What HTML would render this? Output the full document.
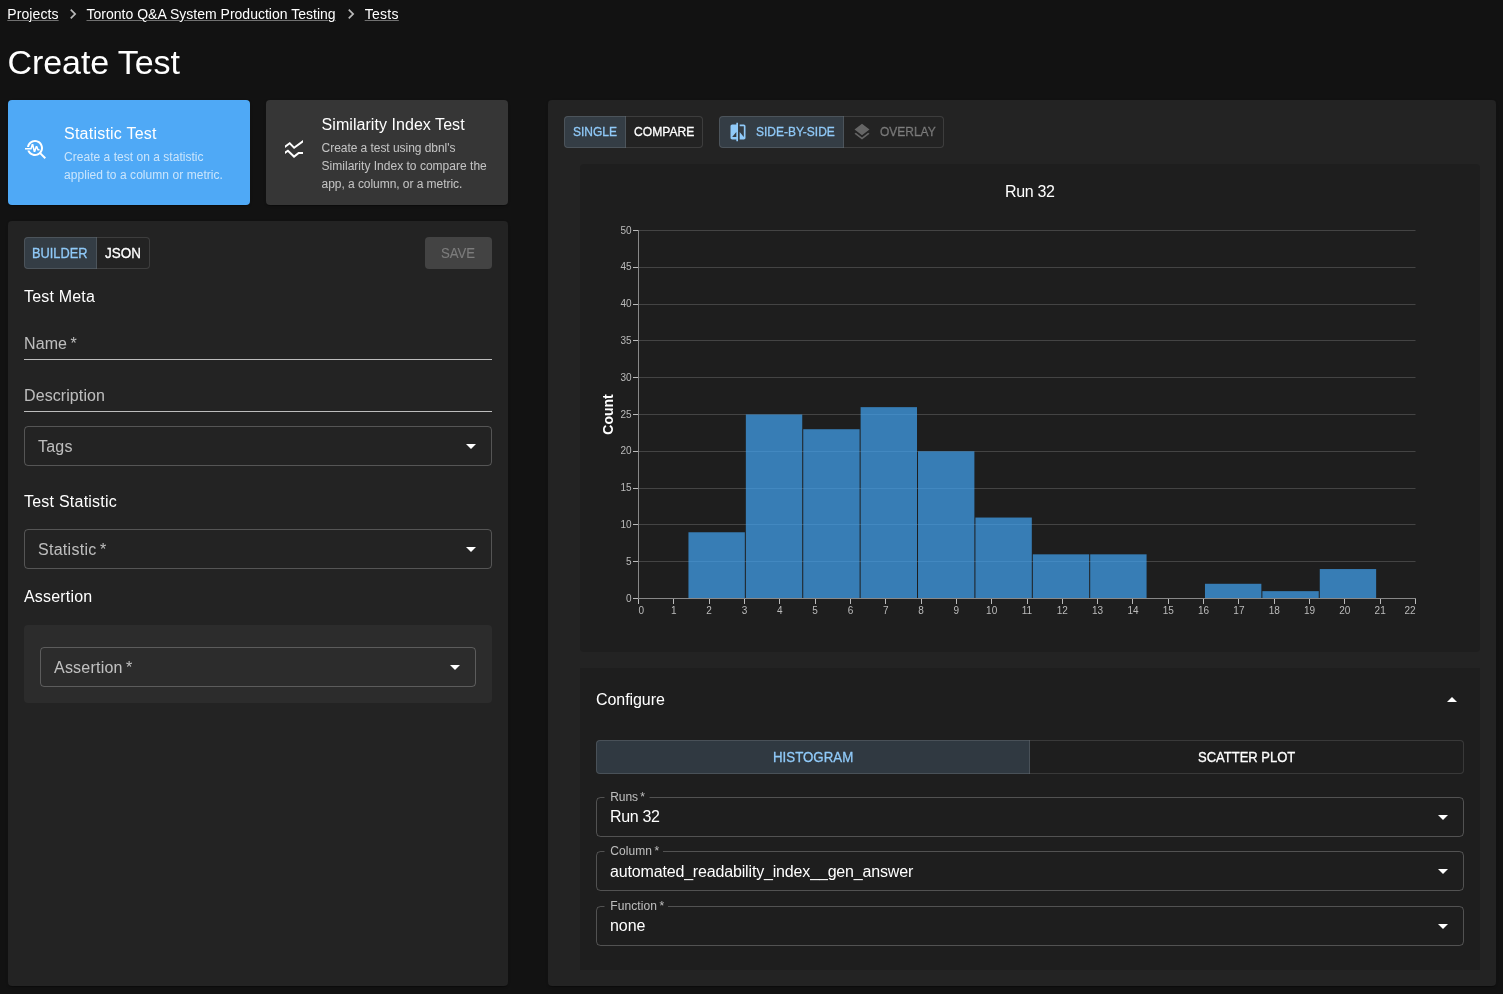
<!DOCTYPE html><html lang="en"><head><meta charset="utf-8"><title>Create Test</title><style>

html,body{margin:0;padding:0}
body{width:1503px;height:994px;overflow:hidden;background:#121212;position:relative;font-family:"Liberation Sans", Arial, sans-serif;color:#fff;-webkit-font-smoothing:antialiased}
#root{position:absolute;left:0;top:0;width:1503px;height:994px;will-change:transform}
.b,.ic,.t{position:absolute;box-sizing:border-box}
.t{white-space:pre;margin:0;font-weight:400;line-height:1}
.m{-webkit-text-stroke:0.3px currentColor;transform-origin:0 0}
.ns{-webkit-text-stroke:0.12px currentColor}
.ul{text-decoration:underline;text-decoration-color:rgba(255,255,255,0.4);text-decoration-thickness:1px;text-underline-offset:0.5px}
svg text{font-family:"Liberation Sans", Arial, sans-serif}

</style></head><body><div id="root">
<div class="b" style="left:8px;top:100px;width:242px;height:105px;background:#4fa9f6;border-radius:4px;box-shadow:0 2px 1px -1px rgba(0,0,0,.2),0 1px 1px 0 rgba(0,0,0,.14),0 1px 3px 0 rgba(0,0,0,.12);"></div>
<div class="b" style="left:266px;top:100px;width:242px;height:105px;background:#363636;border-radius:4px;box-shadow:0 2px 1px -1px rgba(0,0,0,.2),0 1px 1px 0 rgba(0,0,0,.14),0 1px 3px 0 rgba(0,0,0,.12);"></div>
<div class="b" style="left:8px;top:221px;width:500px;height:765px;background:#232323;border-radius:4px;box-shadow:0 2px 1px -1px rgba(0,0,0,.2),0 1px 1px 0 rgba(0,0,0,.14),0 1px 3px 0 rgba(0,0,0,.12);"></div>
<div class="b" style="left:548px;top:100px;width:948px;height:886px;background:#232323;border-radius:4px;box-shadow:0 2px 1px -1px rgba(0,0,0,.2),0 1px 1px 0 rgba(0,0,0,.14),0 1px 3px 0 rgba(0,0,0,.12);"></div>
<div class="b" style="left:580px;top:164px;width:900px;height:488px;background:#1e1e1e;border-radius:4px;"></div>
<div class="b" style="left:580px;top:668px;width:900px;height:302px;background:#1e1e1e;"></div>
<svg class="ic" style="left:62.5px;top:4px" width="20" height="20" viewBox="0 0 24 24" fill="#b9b9b9"><path d="M10 6L8.59 7.41 13.17 12l-4.58 4.59L10 18l6-6z"/></svg>
<svg class="ic" style="left:340.5px;top:4px" width="20" height="20" viewBox="0 0 24 24" fill="#b9b9b9"><path d="M10 6L8.59 7.41 13.17 12l-4.58 4.59L10 18l6-6z"/></svg>
<svg class="ic" style="left:24px;top:137px" width="24" height="24" viewBox="0 0 24 24" fill="#fff"><path d="M22 20.59l-4.69-4.69C18.37 14.55 19 12.85 19 11c0-4.42-3.58-8-8-8-4.08 0-7.44 3.05-7.93 7h2.02C5.57 7.17 8.03 5 11 5c3.31 0 6 2.69 6 6s-2.69 6-6 6c-2.42 0-4.5-1.44-5.45-3.5H3.4C4.45 16.69 7.46 19 11 19c1.85 0 3.55-.63 4.9-1.69L20.59 22 22 20.59z"/><path d="M8.43 9.69 9.65 15h1.64l1.26-3.78.95 2.28h2V12h-1l-1.25-3h-1.54l-1.12 3.37L9.35 7H7.7l-1.25 4H1v1.5h6.55z"/></svg>
<svg class="ic" style="left:282px;top:137px" width="24" height="24" viewBox="0 0 24 24" fill="#fff"><path d="M21 5.47 12 12 7.62 7.62 3 11V8.52L7.83 5l4.38 4.38L21 3v2.47zM21 15h-4.7l-4.17 3.34L6 12.41l-3 2.13V17l2.8-2 6.2 6 5-4h4v-2z"/></svg>
<div class="b" style="left:24px;top:237px;width:73px;height:32px;background:rgba(144,202,249,0.16);border:1px solid rgba(255,255,255,0.12);border-radius:4px 0 0 4px;"></div>
<div class="b" style="left:96px;top:237px;width:54px;height:32px;border:1px solid rgba(255,255,255,0.12);border-left-color:transparent;border-radius:0 4px 4px 0;"></div>
<div class="b" style="left:425px;top:237px;width:67px;height:32px;background:#434343;border-radius:4px;"></div>
<div class="b" style="left:24px;top:359px;width:468px;height:1px;background:rgba(255,255,255,0.7);"></div>
<div class="b" style="left:24px;top:411px;width:468px;height:1px;background:rgba(255,255,255,0.7);"></div>
<div class="b" style="left:24px;top:426px;width:468px;height:40px;border:1px solid rgba(255,255,255,0.23);border-radius:4px;"></div>
<svg class="ic" style="left:459px;top:434px" width="24" height="24" viewBox="0 0 24 24" fill="#fff"><path d="M7 10l5 5 5-5z"/></svg>
<div class="b" style="left:24px;top:529px;width:468px;height:40px;border:1px solid rgba(255,255,255,0.23);border-radius:4px;"></div>
<svg class="ic" style="left:459px;top:537px" width="24" height="24" viewBox="0 0 24 24" fill="#fff"><path d="M7 10l5 5 5-5z"/></svg>
<div class="b" style="left:24px;top:625px;width:468px;height:78px;background:#2c2c2c;border-radius:4px;"></div>
<div class="b" style="left:40px;top:647px;width:436px;height:40px;border:1px solid rgba(255,255,255,0.23);border-radius:4px;"></div>
<svg class="ic" style="left:443px;top:655px" width="24" height="24" viewBox="0 0 24 24" fill="#fff"><path d="M7 10l5 5 5-5z"/></svg>
<div class="b" style="left:564px;top:116px;width:62px;height:32px;background:rgba(144,202,249,0.16);border:1px solid rgba(255,255,255,0.12);border-radius:4px 0 0 4px;"></div>
<div class="b" style="left:625px;top:116px;width:78px;height:32px;border:1px solid rgba(255,255,255,0.12);border-left-color:transparent;border-radius:0 4px 4px 0;"></div>
<div class="b" style="left:719px;top:116px;width:125px;height:32px;background:rgba(144,202,249,0.16);border:1px solid rgba(255,255,255,0.12);border-radius:4px 0 0 4px;"></div>
<div class="b" style="left:843px;top:116px;width:101px;height:32px;border:1px solid rgba(255,255,255,0.12);border-left-color:transparent;border-radius:0 4px 4px 0;"></div>
<svg class="ic" style="left:727.5px;top:122px" width="20" height="20" viewBox="0 0 24 24" fill="#90caf9"><path d="M10 3H5c-1.1 0-2 .9-2 2v14c0 1.1.9 2 2 2h5v2h2V1h-2v2zm0 15H5l5-6v6zm9-15h-5v2h5v13l-5-6v9h5c1.1 0 2-.9 2-2V5c0-1.1-.9-2-2-2z"/></svg>
<svg class="ic" style="left:852px;top:122px" width="20" height="20" viewBox="0 0 24 24" fill="rgba(255,255,255,0.3)"><path d="M11.99 18.54l-7.37-5.73L3 14.07l9 7 9-7-1.63-1.27-7.38 5.74zM12 16l7.36-5.73L21 9l-9-7-9 7 1.63 1.27L12 16z"/></svg>
<svg class="ic" style="left:1440px;top:688px" width="24" height="24" viewBox="0 0 24 24" fill="#fff"><path d="M7 14l5-5 5 5z"/></svg>
<div class="b" style="left:596px;top:740px;width:434px;height:34px;background:rgba(144,202,249,0.16);border:1px solid rgba(255,255,255,0.12);border-radius:4px 0 0 4px;"></div>
<div class="b" style="left:1029px;top:740px;width:435px;height:34px;border:1px solid rgba(255,255,255,0.12);border-left-color:transparent;border-radius:0 4px 4px 0;"></div>
<svg class="ic" style="left:0;top:0" width="1503" height="994" fill="none" stroke="rgba(255,255,255,0.23)" stroke-width="1">
<path d="M604.5 797.5H600.5A4 4 0 0 0 596.5 801.5V832.5A4 4 0 0 0 600.5 836.5H1459.5A4 4 0 0 0 1463.5 832.5V801.5A4 4 0 0 0 1459.5 797.5H649.5"/>
<path d="M604.5 851.5H600.5A4 4 0 0 0 596.5 855.5V886.5A4 4 0 0 0 600.5 890.5H1459.5A4 4 0 0 0 1463.5 886.5V855.5A4 4 0 0 0 1459.5 851.5H663.0"/>
<path d="M604.5 906.5H600.5A4 4 0 0 0 596.5 910.5V941.5A4 4 0 0 0 600.5 945.5H1459.5A4 4 0 0 0 1463.5 941.5V910.5A4 4 0 0 0 1459.5 906.5H668.0"/>
</svg>
<svg class="ic" style="left:1431px;top:805px" width="24" height="24" viewBox="0 0 24 24" fill="#fff"><path d="M7 10l5 5 5-5z"/></svg>
<svg class="ic" style="left:1431px;top:859px" width="24" height="24" viewBox="0 0 24 24" fill="#fff"><path d="M7 10l5 5 5-5z"/></svg>
<svg class="ic" style="left:1431px;top:914px" width="24" height="24" viewBox="0 0 24 24" fill="#fff"><path d="M7 10l5 5 5-5z"/></svg>
<svg class="ic" style="left:0;top:0" width="1503" height="994">
<g stroke="#444" stroke-width="1">
<line x1="638.5" x2="1415.5" y1="561.5" y2="561.5"/>
<line x1="638.5" x2="1415.5" y1="524.5" y2="524.5"/>
<line x1="638.5" x2="1415.5" y1="488.5" y2="488.5"/>
<line x1="638.5" x2="1415.5" y1="451.5" y2="451.5"/>
<line x1="638.5" x2="1415.5" y1="414.5" y2="414.5"/>
<line x1="638.5" x2="1415.5" y1="377.5" y2="377.5"/>
<line x1="638.5" x2="1415.5" y1="340.5" y2="340.5"/>
<line x1="638.5" x2="1415.5" y1="304.5" y2="304.5"/>
<line x1="638.5" x2="1415.5" y1="267.5" y2="267.5"/>
<line x1="638.5" x2="1415.5" y1="230.5" y2="230.5"/>
</g>
<g fill="#42a5f5" fill-opacity="0.7">
<rect x="688.45" y="532.26" width="56.39" height="66.24"/>
<rect x="745.84" y="414.50" width="56.39" height="184.00"/>
<rect x="803.23" y="429.22" width="56.39" height="169.28"/>
<rect x="860.62" y="407.14" width="56.39" height="191.36"/>
<rect x="918.01" y="451.30" width="56.39" height="147.20"/>
<rect x="975.41" y="517.54" width="56.39" height="80.96"/>
<rect x="1032.80" y="554.34" width="56.39" height="44.16"/>
<rect x="1090.19" y="554.34" width="56.39" height="44.16"/>
<rect x="1204.97" y="583.78" width="56.39" height="14.72"/>
<rect x="1262.37" y="591.14" width="56.39" height="7.36"/>
<rect x="1319.76" y="569.06" width="56.39" height="29.44"/>
</g>
<g stroke="#bbb" stroke-width="1">
<line x1="633.0" x2="638.0" y1="598.5" y2="598.5"/>
<line x1="633.0" x2="638.0" y1="561.5" y2="561.5"/>
<line x1="633.0" x2="638.0" y1="524.5" y2="524.5"/>
<line x1="633.0" x2="638.0" y1="488.5" y2="488.5"/>
<line x1="633.0" x2="638.0" y1="451.5" y2="451.5"/>
<line x1="633.0" x2="638.0" y1="414.5" y2="414.5"/>
<line x1="633.0" x2="638.0" y1="377.5" y2="377.5"/>
<line x1="633.0" x2="638.0" y1="340.5" y2="340.5"/>
<line x1="633.0" x2="638.0" y1="304.5" y2="304.5"/>
<line x1="633.0" x2="638.0" y1="267.5" y2="267.5"/>
<line x1="633.0" x2="638.0" y1="230.5" y2="230.5"/>
<line x1="638.5" x2="638.5" y1="599.0" y2="604.0"/>
<line x1="673.5" x2="673.5" y1="599.0" y2="604.0"/>
<line x1="709.5" x2="709.5" y1="599.0" y2="604.0"/>
<line x1="744.5" x2="744.5" y1="599.0" y2="604.0"/>
<line x1="779.5" x2="779.5" y1="599.0" y2="604.0"/>
<line x1="815.5" x2="815.5" y1="599.0" y2="604.0"/>
<line x1="850.5" x2="850.5" y1="599.0" y2="604.0"/>
<line x1="885.5" x2="885.5" y1="599.0" y2="604.0"/>
<line x1="921.5" x2="921.5" y1="599.0" y2="604.0"/>
<line x1="956.5" x2="956.5" y1="599.0" y2="604.0"/>
<line x1="991.5" x2="991.5" y1="599.0" y2="604.0"/>
<line x1="1027.5" x2="1027.5" y1="599.0" y2="604.0"/>
<line x1="1062.5" x2="1062.5" y1="599.0" y2="604.0"/>
<line x1="1097.5" x2="1097.5" y1="599.0" y2="604.0"/>
<line x1="1132.5" x2="1132.5" y1="599.0" y2="604.0"/>
<line x1="1168.5" x2="1168.5" y1="599.0" y2="604.0"/>
<line x1="1203.5" x2="1203.5" y1="599.0" y2="604.0"/>
<line x1="1238.5" x2="1238.5" y1="599.0" y2="604.0"/>
<line x1="1274.5" x2="1274.5" y1="599.0" y2="604.0"/>
<line x1="1309.5" x2="1309.5" y1="599.0" y2="604.0"/>
<line x1="1344.5" x2="1344.5" y1="599.0" y2="604.0"/>
<line x1="1380.5" x2="1380.5" y1="599.0" y2="604.0"/>
<line x1="1415.5" x2="1415.5" y1="599.0" y2="604.0"/>
</g>
<g stroke="#888" stroke-width="1"><line x1="638.5" x2="638.5" y1="230" y2="599.0"/><line x1="638.0" x2="1416.0" y1="598.5" y2="598.5"/></g>
<g fill="#bbb" font-size="10">
<text x="631.5" y="601.50" text-anchor="end">0</text>
<text x="631.5" y="564.70" text-anchor="end">5</text>
<text x="631.5" y="527.90" text-anchor="end">10</text>
<text x="631.5" y="491.10" text-anchor="end">15</text>
<text x="631.5" y="454.30" text-anchor="end">20</text>
<text x="631.5" y="417.50" text-anchor="end">25</text>
<text x="631.5" y="380.70" text-anchor="end">30</text>
<text x="631.5" y="343.90" text-anchor="end">35</text>
<text x="631.5" y="307.10" text-anchor="end">40</text>
<text x="631.5" y="270.30" text-anchor="end">45</text>
<text x="631.5" y="233.50" text-anchor="end">50</text>
<text x="638.50" y="614" text-anchor="start">0</text>
<text x="673.82" y="614" text-anchor="middle">1</text>
<text x="709.14" y="614" text-anchor="middle">2</text>
<text x="744.45" y="614" text-anchor="middle">3</text>
<text x="779.77" y="614" text-anchor="middle">4</text>
<text x="815.09" y="614" text-anchor="middle">5</text>
<text x="850.41" y="614" text-anchor="middle">6</text>
<text x="885.73" y="614" text-anchor="middle">7</text>
<text x="921.05" y="614" text-anchor="middle">8</text>
<text x="956.36" y="614" text-anchor="middle">9</text>
<text x="991.68" y="614" text-anchor="middle">10</text>
<text x="1027.00" y="614" text-anchor="middle">11</text>
<text x="1062.32" y="614" text-anchor="middle">12</text>
<text x="1097.64" y="614" text-anchor="middle">13</text>
<text x="1132.95" y="614" text-anchor="middle">14</text>
<text x="1168.27" y="614" text-anchor="middle">15</text>
<text x="1203.59" y="614" text-anchor="middle">16</text>
<text x="1238.91" y="614" text-anchor="middle">17</text>
<text x="1274.23" y="614" text-anchor="middle">18</text>
<text x="1309.55" y="614" text-anchor="middle">19</text>
<text x="1344.86" y="614" text-anchor="middle">20</text>
<text x="1380.18" y="614" text-anchor="middle">21</text>
<text x="1415.50" y="614" text-anchor="end">22</text>
</g>
<text transform="translate(613,414.5) rotate(-90)" text-anchor="middle" font-size="14" font-weight="bold" fill="#fff">Count</text>
</svg>
<div class="t ul" style="left:7.3px;top:7.00px;font-size:14px;letter-spacing:0.095px;color:#fff">Projects</div>
<div class="t ul" style="left:86.5px;top:7.00px;font-size:14px;letter-spacing:0.011px;color:#fff">Toronto Q&amp;A System Production Testing</div>
<div class="t ul" style="left:364.7px;top:7.00px;font-size:14px;letter-spacing:0.291px;color:#fff">Tests</div>
<h1 class="t" style="left:7.6px;top:45.20px;font-size:34px;letter-spacing:-0.097px;color:#fff">Create Test</h1>
<div class="t" style="left:64px;top:126.00px;font-size:16px;letter-spacing:0.231px;color:#fff">Statistic Test</div>
<div class="t" style="left:64px;top:151.00px;font-size:12px;letter-spacing:0.030px;color:rgba(255,255,255,0.7)">Create a test on a statistic</div>
<div class="t" style="left:64px;top:169.00px;font-size:12px;letter-spacing:0.053px;color:rgba(255,255,255,0.7)">applied to a column or metric.</div>
<div class="t" style="left:321.6px;top:117.00px;font-size:16px;letter-spacing:0.051px;color:#fff">Similarity Index Test</div>
<div class="t" style="left:321.6px;top:142.00px;font-size:12px;letter-spacing:-0.049px;color:rgba(255,255,255,0.7)">Create a test using dbnl's</div>
<div class="t" style="left:321.6px;top:160.00px;font-size:12px;letter-spacing:0.014px;color:rgba(255,255,255,0.7)">Similarity Index to compare the</div>
<div class="t" style="left:321.6px;top:178.00px;font-size:12px;letter-spacing:-0.053px;color:rgba(255,255,255,0.7)">app, a column, or a metric.</div>
<div class="t m" style="left:32.4px;top:246.00px;font-size:14px;transform:scaleX(0.9127);color:#90caf9">BUILDER</div>
<div class="t m" style="left:104.8px;top:246.00px;font-size:14px;transform:scaleX(0.9597);color:#fff">JSON</div>
<div class="t m ns" style="left:440.8px;top:246.00px;font-size:14px;transform:scaleX(0.9401);color:#7c7c7c">SAVE</div>
<div class="t" style="left:24px;top:289.00px;font-size:16px;letter-spacing:0.194px;color:#fff">Test Meta</div>
<div class="t" style="left:24px;top:336.00px;font-size:16px;letter-spacing:0.113px;color:rgba(255,255,255,0.7)">Name&thinsp;*</div>
<div class="t" style="left:24px;top:388.00px;font-size:16px;letter-spacing:0.088px;color:rgba(255,255,255,0.7)">Description</div>
<div class="t" style="left:38px;top:439.00px;font-size:16px;letter-spacing:0.203px;color:rgba(255,255,255,0.7)">Tags</div>
<div class="t" style="left:24px;top:494.00px;font-size:16px;letter-spacing:0.231px;color:#fff">Test Statistic</div>
<div class="t" style="left:38px;top:542.00px;font-size:16px;letter-spacing:0.276px;color:rgba(255,255,255,0.7)">Statistic&thinsp;*</div>
<div class="t" style="left:24px;top:589.00px;font-size:16px;letter-spacing:0.182px;color:#fff">Assertion</div>
<div class="t" style="left:54px;top:660.00px;font-size:16px;letter-spacing:0.215px;color:rgba(255,255,255,0.7)">Assertion&thinsp;*</div>
<div class="t m" style="left:572.5px;top:124.70px;font-size:13px;transform:scaleX(0.9227);color:#90caf9">SINGLE</div>
<div class="t m" style="left:633.6px;top:124.70px;font-size:13px;transform:scaleX(0.9308);color:#fff">COMPARE</div>
<div class="t m" style="left:755.7px;top:124.70px;font-size:13px;transform:scaleX(0.9222);color:#90caf9">SIDE-BY-SIDE</div>
<div class="t m" style="left:879.7px;top:124.70px;font-size:13px;transform:scaleX(0.9216);color:rgba(255,255,255,0.3)">OVERLAY</div>
<div class="t" style="left:1005px;top:184.00px;font-size:16px;letter-spacing:-0.354px;color:#fff">Run 32</div>
<div class="t" style="left:596px;top:692.00px;font-size:16px;letter-spacing:-0.063px;color:#fff">Configure</div>
<div class="t m" style="left:772.9px;top:750.00px;font-size:14px;transform:scaleX(0.9492);color:#90caf9">HISTOGRAM</div>
<div class="t m" style="left:1197.5px;top:750.00px;font-size:14px;transform:scaleX(0.9290);color:#fff">SCATTER PLOT</div>
<div class="t" style="left:610.3px;top:791.00px;font-size:12px;letter-spacing:-0.106px;color:rgba(255,255,255,0.7)">Runs&thinsp;*</div>
<div class="t" style="left:610.3px;top:844.80px;font-size:12px;letter-spacing:0.067px;color:rgba(255,255,255,0.7)">Column&thinsp;*</div>
<div class="t" style="left:610.3px;top:900.00px;font-size:12px;letter-spacing:0.086px;color:rgba(255,255,255,0.7)">Function&thinsp;*</div>
<div class="t" style="left:610px;top:809.00px;font-size:16px;letter-spacing:-0.354px;color:#fff">Run 32</div>
<div class="t" style="left:610px;top:863.50px;font-size:16px;letter-spacing:-0.164px;color:#fff">automated_readability_index__gen_answer</div>
<div class="t" style="left:610px;top:918.00px;font-size:16px;letter-spacing:-0.078px;color:#fff">none</div>
</div></body></html>
